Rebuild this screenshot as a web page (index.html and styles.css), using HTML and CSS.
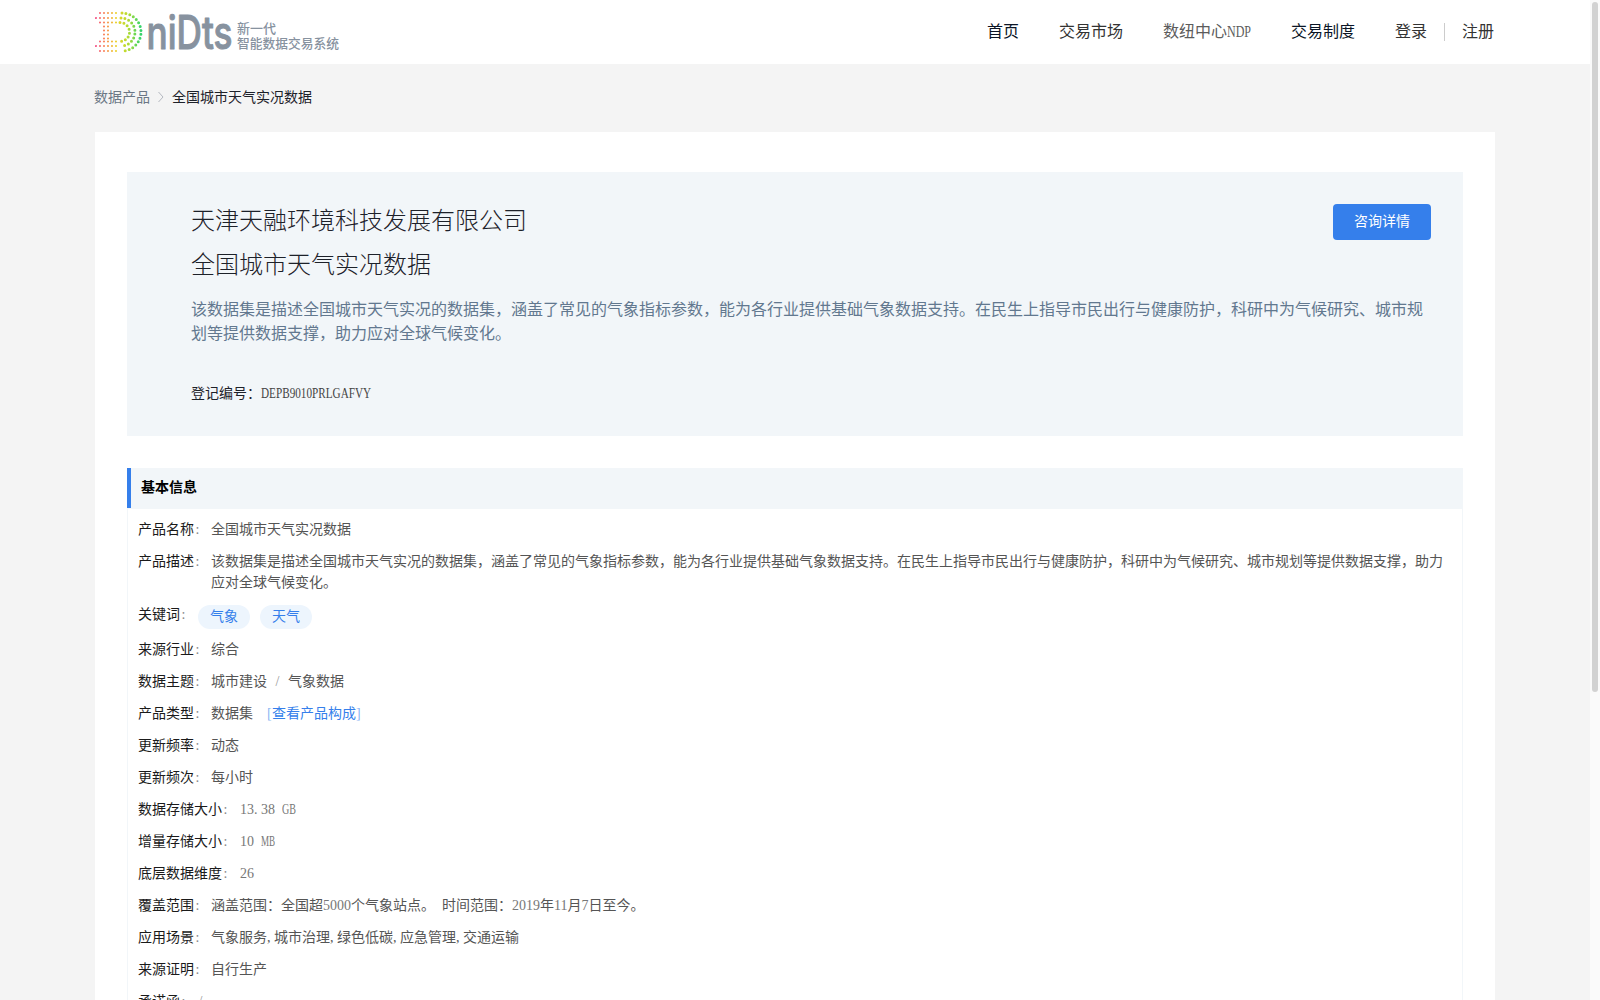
FILE: index.html
```
<!doctype html>
<html lang="zh-CN">
    <head>
        <meta charset="utf-8">
        <title>全国城市天气实况数据</title>
        <meta name="viewport" content="width=device-width, initial-scale=1">
        <link rel="stylesheet" href="styles.css">
    </head>
    <body>
        <div class="page">
            <header class="header">
                <div class="container header-inner">
                    <svg class="logo" width="250" height="48" viewBox="0 0 250 48">
                        <defs>
                            <linearGradient id="rainbow" gradientUnits="userSpaceOnUse" x1="0" y1="0" x2="46" y2="0">
                                <stop offset="0" stop-color="#f2508c" />
                                <stop offset="0.22" stop-color="#fa8a58" />
                                <stop offset="0.45" stop-color="#ecd22e" />
                                <stop offset="0.7" stop-color="#b8dc30" />
                                <stop offset="1" stop-color="#35d46c" />
                            </linearGradient>
                        </defs>
                        <g class="dots" stroke="url(#rainbow)">
                            <path d="M5 5 H25 M5 43 H25" />
                            <path d="M1 10 H25 M1 38 H25" />
                            <path d="M5 14.5 H25 M5 33.5 H25" />
                            <path d="M9 18.5 V32" />
                            <path d="M13 18.5 V32" />
                            <path class="big" d="M27 5 A19 19 0 0 1 27 43" />
                            <path class="big" d="M26 10 A14 14 0 0 1 26 38" />
                            <path class="big" d="M25 14.5 A9.5 9.5 0 0 1 25 33.5" />
                        </g>
                        <text class="logo-name" x="51.5" y="41" textLength="86" lengthAdjust="spacingAndGlyphs">niDts</text>
                        <text class="logo-sub" x="142" y="24.5" textLength="39" lengthAdjust="spacingAndGlyphs">新一代</text>
                        <text class="logo-sub" x="142" y="39.5" textLength="102" lengthAdjust="spacingAndGlyphs">智能数据交易系统</text>
                    </svg>
                    <nav class="nav">
                        <a class="dark">首页</a>
                        <a>交易市场</a>
                        <a class="light">数纽中心<span class="latin ndp">NDP</span></a>
                        <a class="dark">交易制度</a>
                        <a class="login">登录</a>
                        <i class="divider"></i>
                        <a>注册</a>
                    </nav>
                </div>
            </header>

            <div class="container">
                <div class="breadcrumb">
                    <span>数据产品</span>
                    <svg width="6" height="12" viewBox="0 0 6 12"><path d="M0.5 1 L5 6 L0.5 11" /></svg>
                    <span class="current">全国城市天气实况数据</span>
                </div>

                <main class="card">
                    <section class="banner">
                        <div class="banner-title">
                            <h1>天津天融环境科技发展有限公司</h1>
                            <button>咨询详情</button>
                        </div>
                        <h2>全国城市天气实况数据</h2>
                        <p class="intro">该数据集是描述全国城市天气实况的数据集，涵盖了常见的气象指标参数，能为各行业提供基础气象数据支持。在民生上指导市民出行与健康防护，科研中为气候研究、城市规划等提供数据支撑，助力应对全球气候变化。</p>
                        <p class="number">登记编号：<span class="latin code">DEPB9010PRLGAFVY</span></p>
                    </section>

                    <h3 class="section-title">基本信息</h3>
                    <dl class="info">
                        <div class="row"><dt>产品名称</dt><dd>全国城市天气实况数据</dd></div>
                        <div class="row"><dt>产品描述</dt><dd>该数据集是描述全国城市天气实况的数据集，涵盖了常见的气象指标参数，能为各行业提供基础气象数据支持。在民生上指导市民出行与健康防护，科研中为气候研究、城市规划等提供数据支撑，助力应对全球气候变化。</dd></div>
                        <div class="row"><dt>关键词</dt><dd class="tags"><span class="tag">气象</span><span class="tag">天气</span></dd></div>
                        <div class="row"><dt>来源行业</dt><dd>综合</dd></div>
                        <div class="row"><dt>数据主题</dt><dd>城市建设 <span class="slash">/</span> 气象数据</dd></div>
                        <div class="row"><dt>产品类型</dt><dd>数据集<a class="link"><span class="bracket">[</span>查看产品构成<span class="bracket">]</span></a></dd></div>
                        <div class="row"><dt>更新频率</dt><dd>动态</dd></div>
                        <div class="row"><dt>更新频次</dt><dd>每小时</dd></div>
                        <div class="row"><dt>数据存储大小</dt><dd class="num">13<i>.</i>38 <span class="latin gb">GB</span></dd></div>
                        <div class="row"><dt>增量存储大小</dt><dd class="num">10 <span class="latin mb">MB</span></dd></div>
                        <div class="row"><dt>底层数据维度</dt><dd class="num">26</dd></div>
                        <div class="row"><dt>覆盖范围</dt><dd class="range">涵盖范围：全国超<span class="num">5000</span>个气象站点。 时间范围：<span class="num">2019</span>年<span class="num">11</span>月<span class="num">7</span>日至今。</dd></div>
                        <div class="row"><dt>应用场景</dt><dd>气象服务<i>,</i>城市治理<i>,</i>绿色低碳<i>,</i>应急管理<i>,</i>交通运输</dd></div>
                        <div class="row"><dt>来源证明</dt><dd>自行生产</dd></div>
                        <div class="row"><dt>承诺函</dt><dd><span class="slash start">/</span></dd></div>
                    </dl>
                </main>
            </div>
        </div>
        <div class="scrollbar"><div class="thumb"></div></div>
    </body>
</html>
```
FILE: styles.css
```
* {
    box-sizing: border-box;
    margin: 0;
    padding: 0;
}

body {
    display: flex;
    height: 100vh;
    overflow: hidden;
    background: #f4f4f4;
    font: 14px/21px "Liberation Serif", "Noto Sans CJK SC", serif;
    color: #1d2129;
}

.page {
    flex: 1;
    height: 100vh;
    overflow: hidden;
}

.scrollbar {
    width: 10px;
    padding: 2px;
    background: #fafafa;
}

.thumb {
    height: 690px;
    border-radius: 3px;
    background: #d2d2d2;
}

.container {
    width: 1400px;
    margin: 0 auto;
}

.header {
    height: 64px;
    background: #fff;
}

.header-inner {
    display: flex;
    align-items: center;
    justify-content: space-between;
    height: 64px;
}

.dots {
    fill: none;
    stroke-width: 2.1;
    stroke-linecap: round;
    stroke-dasharray: 0 4;
}

.dots .big { stroke-width: 3; }

.logo-name {
    font: 500 46px "Inter", sans-serif;
    fill: #87929f;
    stroke: #87929f;
    stroke-width: 1;
    stroke-linejoin: round;
}

.logo-sub {
    font: 500 12.8px "Noto Sans CJK SC", sans-serif;
    fill: #87929f;
}

.nav {
    display: flex;
    align-items: center;
    gap: 40px;
    padding-right: 1px;
    font-size: 16px;
    line-height: 24px;
    color: #333;
}

.nav .dark { color: #0b1526; }
.nav .light { color: #5c5c5c; }
.nav .login { margin-right: -23px; }

/* half-width latin, each character is half an em */
.latin {
    display: inline-block;
    height: 21px;
    vertical-align: top;
    transform-origin: 0 0;
    white-space: nowrap;
}

.ndp {
    width: 24px;
    height: 24px;
    transform: scaleX(0.75);
}

.divider {
    width: 1px;
    height: 18px;
    margin-right: -23px;
    background: #ccc;
}

.breadcrumb {
    display: flex;
    align-items: center;
    gap: 8px;
    height: 68px;
    margin-left: -1px;
    padding-bottom: 2px;
    color: #6b7785;
}

.breadcrumb svg {
    fill: none;
    stroke: #b4b8c0;
}

.breadcrumb .current { color: #1d2129; }

.card {
    height: 1100px;
    padding: 40px 32px;
    background: #fff;
}

.banner {
    height: 264px;
    padding: 32px 32px 0 64px;
    background: #f2f6f9;
}

.banner-title {
    display: flex;
    justify-content: space-between;
    height: 36px;
}

h1, h2 {
    font-size: 24px;
    font-weight: 300;
    line-height: 36px;
}

h1 { line-height: 34px; }
h2 { margin-top: 7px; }

button {
    width: 98px;
    height: 36px;
    padding-bottom: 2px;
    border: 0;
    border-radius: 4px;
    background: #357feb;
    color: #fff;
    font: inherit;
}

.intro {
    margin-top: 15px;
    font-size: 16px;
    line-height: 24px;
    color: #62788f;
}

.number { margin-top: 37px; }

.code {
    width: 112px;
    transform: scaleX(0.8);
    color: #444;
}

.section-title {
    height: 40px;
    margin-top: 32px;
    padding-left: 10px;
    border-left: 4px solid #357feb;
    background: #f2f6f9;
    font-size: 14px;
    line-height: 40px;
    color: #000;
}

.info {
    height: 700px;
    padding: 10px 10px 0;
    border: 1px solid #f2f6f9;
}

.row {
    display: flex;
    margin-bottom: 11px;
}

dt {
    flex: none;
    margin-right: 10px;
    color: #1a1a1a;
}

dt::after {
    content: ":";
    display: inline-block;
    width: 7px;
    text-align: center;
    color: #888;
}

dd { color: #555; }

dd.num, dd .num { color: #777; }
dd.num { padding-left: 1px; word-spacing: 3.5px; }
.range { word-spacing: 3.5px; }

.gb {
    width: 14px;
    transform: scaleX(0.72);
}

.mb {
    width: 14px;
    transform: scaleX(0.65);
}

dd i {
    display: inline-block;
    width: 7px;
    font-style: normal;
}

.slash {
    display: inline-block;
    width: 14px;
    text-align: center;
    color: #999;
}

.slash.start { width: 7px; }

.tags {
    display: flex;
    gap: 10px;
    padding: 1px 0 0 1px;
    margin-bottom: -1px;
}

.tag {
    width: 52px;
    height: 24px;
    border-radius: 12px;
    background: #edf5fd;
    line-height: 23px;
    text-align: center;
    color: #357feb;
}

.link {
    margin-left: 14px;
    color: #357feb;
}

.bracket {
    display: inline-block;
    width: 5px;
    color: #8db6f3;
}
```
